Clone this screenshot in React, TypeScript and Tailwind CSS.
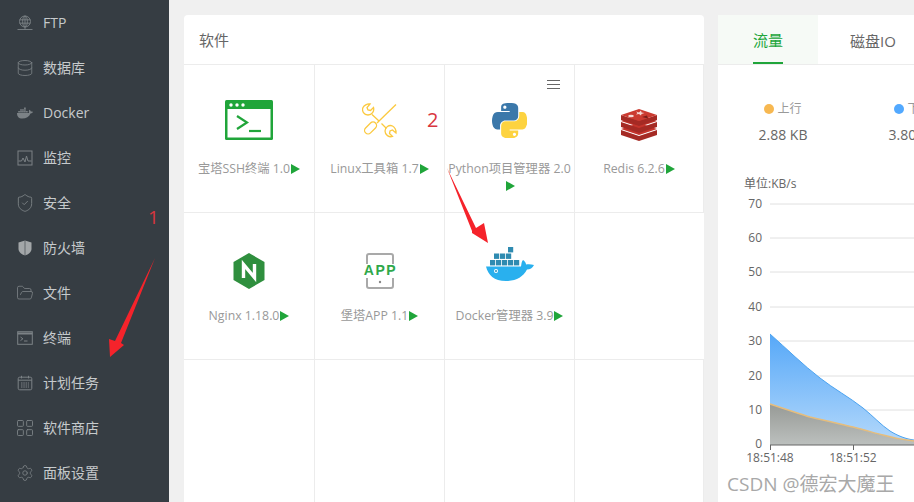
import type { ReactNode } from "react";
import { Database, FolderOpen, LayoutGrid, Settings, ShieldCheck } from "lucide-react";
import { FaDocker } from "react-icons/fa";

const iconClass = "size-[16px] shrink-0 text-[#7c8286]";
const lucideClass = "size-[18px] shrink-0 text-[#7c8286]";

function FtpIcon() {
  return (
    <svg viewBox="0 0 16 16" fill="none" stroke="currentColor" strokeWidth="0.9" className={iconClass}>
      <circle cx="8" cy="6.5" r="5.5" />
      <ellipse cx="8" cy="6.5" rx="2.4" ry="5.5" />
      <path d="M2.7 4.8h10.6M2.7 8.2h10.6M8 1v11M0.5 14.5h15M8 12v2.5" />
    </svg>
  );
}

function MonitorIcon() {
  return (
    <svg viewBox="0 0 16 16" fill="none" stroke="currentColor" strokeWidth="1" className={iconClass}>
      <rect x="1" y="1" width="14" height="14" />
      <path d="M1.5 11h3l1.5-3 2 4 1.5-6 1.5 5h3.5" />
    </svg>
  );
}

function FirewallIcon() {
  return (
    <svg viewBox="0 0 16 16" className="size-[16px] shrink-0 text-[#a3a7a9]" fill="currentColor">
      <path d="M8 0.5 1.5 2.5V9c0 3 3 5.3 6.5 6.5 3.5-1.2 6.5-3.5 6.5-6.5V2.5Z" />
      <path d="M8 0.5v15" stroke="#363d43" strokeWidth="0.6" />
    </svg>
  );
}

function TerminalIcon() {
  return (
    <svg viewBox="0 0 16 16" fill="none" stroke="currentColor" className={iconClass}>
      <rect x="0.7" y="1.7" width="14.6" height="12.6" strokeWidth="1" />
      <path d="M0.7 3.5h14.6" strokeWidth="2" />
      <path d="M3.5 7l2.4 1.8-2.4 1.8M7 11h3.5" strokeWidth="1" />
    </svg>
  );
}

function CalendarIcon() {
  return (
    <svg viewBox="0 0 16 16" fill="none" stroke="currentColor" strokeWidth="1" className={iconClass}>
      <rect x="1.2" y="2.2" width="13.6" height="12.6" rx="1.5" />
      <path d="M4.5 0.8v2.6M11.5 0.8v2.6M1.2 5.2h13.6" />
      <path d="M4 8h8M4 10h8M4 12h8" strokeDasharray="1.5 0.8" />
    </svg>
  );
}

const navItems: { label: string; icon: ReactNode }[] = [
  { label: "FTP", icon: <FtpIcon /> },
  { label: "数据库", icon: <Database className={lucideClass} strokeWidth={1.1} /> },
  { label: "Docker", icon: <FaDocker className={iconClass} /> },
  { label: "监控", icon: <MonitorIcon /> },
  { label: "安全", icon: <ShieldCheck className="size-[20px] shrink-0 text-[#7c8286]" strokeWidth={1.1} /> },
  { label: "防火墙", icon: <FirewallIcon /> },
  { label: "文件", icon: <FolderOpen className={lucideClass} strokeWidth={1.1} /> },
  { label: "终端", icon: <TerminalIcon /> },
  { label: "计划任务", icon: <CalendarIcon /> },
  { label: "软件商店", icon: <LayoutGrid className="size-[20px] shrink-0 text-[#7c8286]" strokeWidth={1.1} /> },
  { label: "面板设置", icon: <Settings className={lucideClass} strokeWidth={1.1} /> },
];

function Sidebar() {
  return (
    <aside className="w-[169px] shrink-0 bg-[#363d43]">
      {navItems.map((item) => (
        <div key={item.label} className="flex h-[45px] items-center gap-[10px] pl-[17px] text-[14px] text-[#c6cacc]">
          <span className="flex w-[16px] justify-center">{item.icon}</span>
          <span>{item.label}</span>
        </div>
      ))}
    </aside>
  );
}

function SshIcon() {
  return (
    <svg viewBox="0 0 48 40" className="h-[40px] w-[48px] shrink-0">
      <rect width="48" height="40" rx="1.5" fill="#20a53a" />
      <rect x="2.5" y="9" width="43" height="28.5" fill="#fff" />
      <circle cx="6" cy="5" r="1.7" fill="#fff" />
      <circle cx="12" cy="5" r="1.7" fill="#fff" />
      <circle cx="18" cy="5" r="1.7" fill="#fff" />
      <path d="M12 16l10 6.5-10 6.5" fill="none" stroke="#20a53a" strokeWidth="2.2" />
      <path d="M24 31h12" stroke="#20a53a" strokeWidth="2.2" />
    </svg>
  );
}

function ToolsIcon() {
  const head = "M8 1 5 4.500 6 7 8.500 7.500 11.500 4.500C12.500 8 10 12 6 12 2 12-.5 8 1 4.500 2 2.500 5 .5 8 1Z";
  return (
    <svg viewBox="0 0 36 36" fill="none" stroke="#fbc93f" strokeWidth="1.300" className="size-[36px] shrink-0">
      <path d="M34 1.500 15 20" />
      <rect x="-3.500" y="0" width="7" height="14" rx="3.500" transform="translate(13.500 20) rotate(45)" />
      <path d={head} />
      <path d="M10 11.500 17 18M19.500 20.500 24.500 25.500" />
      <path d={head} transform="translate(22 22) rotate(90 6.500 6.500)" />
    </svg>
  );
}

function PythonIcon() {
  return (
    <svg viewBox="0 0 110 110" className="size-[35px] shrink-0">
      <path
        fill="#3b78aa"
        d="M54.9 0c-4.6 0-9 .4-12.8 1.100C30.800 3.100 28.700 7.300 28.700 15v10.200h26.800v3.400H18.600c-7.800 0-14.600 4.700-16.700 13.600-2.500 10.200-2.600 16.600 0 27.300 1.900 7.900 6.400 13.600 14.200 13.600h9.200V71.900c0-8.900 7.700-16.700 16.800-16.700h26.800c7.400 0 13.400-6.100 13.400-13.600V15c0-7.300-6.100-12.700-13.400-13.900C64.300.3 59.500 0 54.900 0ZM40.400 8.200c2.800 0 5 2.300 5 5.100s-2.200 5.100-5 5.100-5-2.300-5-5.100 2.200-5.100 5-5.100Z"
      />
      <path
        fill="#fdd340"
        d="M85.600 28.700v11.900c0 9.200-7.800 17-16.700 17H42.100c-7.300 0-13.400 6.300-13.400 13.600v25.500c0 7.300 6.300 11.500 13.400 13.600 8.500 2.500 16.600 3 26.800 0 6.700-2 13.400-5.900 13.400-13.600V86.500H55.500v-3.400h40.200c7.800 0 10.700-5.400 13.400-13.600 2.800-8.400 2.700-16.500 0-27.300-1.900-7.800-5.600-13.600-13.400-13.600H85.600ZM70.600 93.300c2.800 0 5 2.300 5 5.100s-2.200 5.100-5 5.100-5-2.300-5-5.100 2.200-5.100 5-5.100Z"
      />
    </svg>
  );
}

function RedisIcon() {
  return (
    <svg viewBox="0 0 38 33" className="h-[33px] w-[38px] shrink-0">
      <path d="M1 22v5l18 6 18-6v-5l-18 6Z" fill="#a52a24" />
      <path d="M1 21l18-6 18 6-18 6Z" fill="#c5342c" />
      <path d="M1 14v5l18 6 18-6v-5l-18 6Z" fill="#a52a24" />
      <path d="M1 13l18-6 18 6-18 6Z" fill="#c5342c" />
      <path d="M1 7v5l18 6 18-6V7l-18 6Z" fill="#a52a24" />
      <path d="M1 7l18-6 18 6-18 6Z" fill="#cb3a30" />
      <path d="M16 3.500l3 1 2-2 .5 2 3 .5-3 1-.5 1.500-2-1.500-3 .500 1.500-1.500Z" fill="#f5d8d4" />
      <ellipse cx="11" cy="8" rx="2.800" ry="1.300" fill="#f5d8d4" />
      <path d="M22 9l5-1.500 1 3Z" fill="#7a1d19" />
    </svg>
  );
}

function NginxIcon() {
  return (
    <svg viewBox="0 0 32 36" className="h-[36px] w-[32px] shrink-0">
      <path d="M16 0 31.500 9v18L16 36 .5 27V9Z" fill="#2f8f3e" />
      <path d="M10.500 25V11.500L21.500 24.500V11" fill="none" stroke="#fff" strokeWidth="3.400" />
    </svg>
  );
}

function AppIcon() {
  return (
    <svg viewBox="0 0 34 36" className="h-[36px] w-[34px] shrink-0">
      <path d="M4 11V3a2 2 0 0 1 2-2h22a2 2 0 0 1 2 2v8M4 25v8a2 2 0 0 0 2 2h22a2 2 0 0 0 2-2v-8" fill="none" stroke="#a9a9a9" strokeWidth="2" />
      <circle cx="17" cy="29" r="1.200" fill="#888" />
      <text x="17.500" y="22" textAnchor="middle" fill="#2fa84a" fontSize="14" fontWeight="700" letterSpacing="1.500" fontFamily="'Liberation Sans', sans-serif">
        APP
      </text>
    </svg>
  );
}

function DockerIcon() {
  const boxes = [
    [22, 0], [8, 6.500], [14, 6.500], [20, 6.500], [4, 13], [10, 13], [16, 13], [22, 13], [28, 13],
  ];
  return (
    <svg viewBox="0 0 48 34" className="h-[34px] w-[48px] shrink-0">
      {boxes.map(([x, y]) => (
        <rect key={`${x}-${y}`} x={x} y={y} width="5.200" height="5.400" fill="#2f8bb1" />
      ))}
      <path
        d="M0 19.500h35c.5-3 .5-5 2-6.500 1.500 1 3 2.500 3 4.500 2-.5 5-.5 8 .5-1.500 3-4 4.500-7 4.500C37 30 30 34 20 34 8 34 2 28 0 19.500Z"
        fill="#29b0ee"
      />
      <circle cx="10" cy="24" r="2" fill="#fff" />
      <circle cx="10" cy="24" r="1" fill="#2f8bb1" />
    </svg>
  );
}

function PlayMark() {
  return (
    <svg viewBox="0 0 9 10" className="ml-px inline-block h-[10px] w-[9px] align-[-1px]">
      <path d="M0 0 9 5 0 10Z" fill="#20a53a" />
    </svg>
  );
}

const apps: { name: string; icon: ReactNode; top: string; menu?: boolean }[] = [
  { name: "宝塔SSH终端 1.0", icon: <SshIcon />, top: "pt-[35px]" },
  { name: "Linux工具箱 1.7", icon: <ToolsIcon />, top: "pt-[38px]" },
  { name: "Python项目管理器 2.0", icon: <PythonIcon />, top: "pt-[38px]", menu: true },
  { name: "Redis 6.2.6", icon: <RedisIcon />, top: "pt-[43px]" },
  { name: "Nginx 1.18.0", icon: <NginxIcon />, top: "pt-[40px]" },
  { name: "堡塔APP 1.1", icon: <AppIcon />, top: "pt-[40px]" },
  { name: "Docker管理器 3.9", icon: <DockerIcon />, top: "pt-[34px]" },
];

function AppCell({ name, icon, top, menu }: (typeof apps)[number]) {
  return (
    <div className="relative flex h-[147.500px] flex-col items-center border-r border-b border-[#ececec]">
      {menu && (
        <span className="absolute top-[15px] right-[14px] flex w-[13px] flex-col gap-[3px]">
          <i className="h-px bg-[#666]" />
          <i className="h-px bg-[#666]" />
          <i className="h-px bg-[#666]" />
        </span>
      )}
      <div className={`flex h-[94.500px] shrink-0 flex-col items-center ${top}`}>{icon}</div>
      <p className="w-full text-center text-[12.300px] leading-[17px] text-[#999]">
        {name}
        <PlayMark />
      </p>
    </div>
  );
}

function SoftwareCard() {
  return (
    <section className="h-[600px] w-[520px] shrink-0 rounded-[4px] bg-white">
      <h2 className="flex h-[50px] items-center border-b border-[#ececec] pt-[2px] pl-[15px] text-[15px] text-[#666]">软件</h2>
      <div className="grid grid-cols-[131px_130px_130px_129px]">
        {apps.map((app) => (
          <AppCell key={app.name} {...app} />
        ))}
        <div className="h-[147.500px] border-b border-[#ececec]" />
        {[0, 1, 2, 3].map((n) => (
          <div key={n} className="h-[147px] border-r border-[#ececec]" />
        ))}
      </div>
    </section>
  );
}

function Stat({ dot, label, value }: { dot: string; label: string; value: string }) {
  return (
    <div className="w-[130px] shrink-0 text-center">
      <p className="flex items-center justify-center gap-[3px] text-[12px] leading-[16px] text-[#999]">
        <i className={`size-[10px] rounded-full ${dot}`} />
        {label}
      </p>
      <p className="mt-[9px] text-[14px] leading-[18px] text-[#666]">{value}</p>
    </div>
  );
}

function TrafficChart() {
  const grid = [204, 238, 272, 307, 341, 376, 410];
  const labels = [70, 60, 50, 40, 30, 20, 10];
  const blue = "M52 334C69 349 85 365 102 378C116 389 131 397 145 408C155 416 163 425 172 431C180 436 188 439 196 440";
  const orange = "M52 404C70 410 82 414 92 417C110 421 122 424 135 427C148 430 156 433 165 435C175 438 186 440 196 441";
  return (
    <svg viewBox="0 190 196 280" className="mt-[-2px] block h-[280px] w-[196px]" fontFamily="'Open Sans', sans-serif">
      <defs>
        <linearGradient id="blueFill" x1="0" y1="0" x2="0" y2="1">
          <stop offset="0" stopColor="#56a8f8" />
          <stop offset="1" stopColor="#b5d9fb" />
        </linearGradient>
        <linearGradient id="greyFill" x1="0" y1="0" x2="0" y2="1">
          <stop offset="0" stopColor="#979a96" />
          <stop offset="1" stopColor="#bcc0be" />
        </linearGradient>
      </defs>
      {grid.map((y, i) => (
        <g key={y}>
          <path d={`M52 ${y}H196`} stroke="#e0e0e0" />
          <text x="44" y={y + 4} textAnchor="end" fontSize="12" fill="#666">{labels[i]}</text>
        </g>
      ))}
      <path d={`${blue}V445H52Z`} fill="url(#blueFill)" />
      <path d={blue} fill="none" stroke="#4ba3f0" />
      <path d={`${orange}V445H52Z`} fill="url(#greyFill)" />
      <path d={orange} fill="none" stroke="#e6bd7c" strokeWidth="1.500" />
      <path d="M52 445H196M52.500 445v5M135.500 445v5" stroke="#666" />
      <text x="44" y="448" textAnchor="end" fontSize="12" fill="#666">0</text>
      <text x="52" y="462" textAnchor="middle" fontSize="12" fill="#666">18:51:48</text>
      <text x="135" y="462" textAnchor="middle" fontSize="12" fill="#666">18:51:52</text>
    </svg>
  );
}

function TrafficCard() {
  return (
    <section className="h-[600px] w-[520px] shrink-0 rounded-[4px] bg-white">
      <div className="flex h-[50px] border-b border-[#ececec] text-[15px]">
        <div className="flex h-[49px] w-[100px] items-center justify-center bg-[#f6faf6] text-[#20a53a]">
          <span className="flex h-full w-[30px] items-center justify-center border-b-2 border-[#20a53a] pt-[4px] whitespace-nowrap">流量</span>
        </div>
        <div className="flex h-[49px] w-[110px] items-center justify-center pt-[4px] text-[#666]">磁盘IO</div>
      </div>
      <div className="mt-[36px] flex">
        <Stat dot="bg-[#f7b851]" label="上行" value="2.88 KB" />
        <Stat dot="bg-[#52a9ff]" label="下行" value="3.80 KB" />
      </div>
      <p className="mt-[32px] pl-[26px] text-[12px] leading-[16px] text-[#666]">单位:KB/s</p>
      <TrafficChart />
    </section>
  );
}

export default function App() {
  return (
    <div
      className="relative flex h-[502px] w-[914px] overflow-hidden bg-[#f0f0f0]"
      style={{ fontFamily: "'Open Sans', 'Noto Sans CJK SC', sans-serif" }}
    >
      <Sidebar />
      <main className="flex items-start gap-[14px] pt-[15px] pl-[15px]">
        <SoftwareCard />
        <TrafficCard />
      </main>
      <span className="absolute top-[205px] left-[148px] text-[19px] leading-[24px] text-[#d9363e]">1</span>
      <span className="absolute top-[107px] left-[427px] text-[20px] leading-[26px] text-[#d9363e]">2</span>
      <svg viewBox="0 0 914 502" className="pointer-events-none absolute inset-0 h-[502px] w-[914px]">
        <path d="M155 258 121 343 124 345 110 357 109 339 115 341Z" fill="#f5232b" />
        <path d="M447 168 476 228 484 223 488 243 472 233 472 231Z" fill="#f5232b" />
      </svg>
      <span className="absolute top-[472px] left-[727px] text-[19px] leading-[24px] text-[#a8a8a8]">CSDN @德宏大魔王</span>
    </div>
  );
}
